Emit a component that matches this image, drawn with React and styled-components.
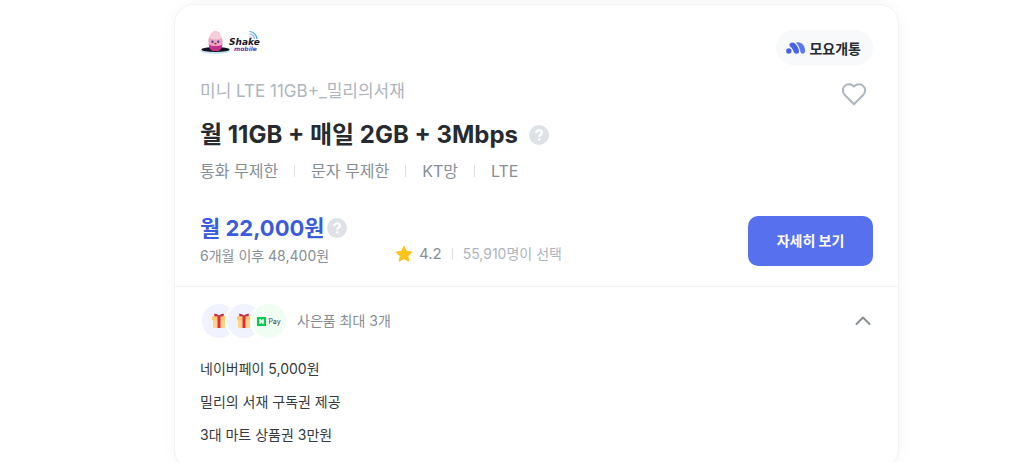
import React, { useState } from "react";
import styled, { createGlobalStyle, css } from "styled-components";

const specs = ["통화 무제한", "문자 무제한", "KT망", "LTE"];
const gifts = ["네이버페이 5,000원", "밀리의 서재 구독권 제공", "3대 마트 상품권 3만원"];

const ShakeLogo = () => (
  <svg width="60" height="26" viewBox="0 0 60 26" role="img" aria-label="Shake mobile">
    <ellipse cx="15.500" cy="20.500" rx="15" ry="3.500" fill="#c3e4f0" />
    <ellipse cx="15.500" cy="19.500" rx="14" ry="2.600" fill="#15131c" />
    <path d="M8.500 13C8 9 9 7 10.500 5.500C10.500 3.500 12 3 12.500 2.500C13 0.800 17 0.800 18 2C20 2.500 20.500 4 20 5.500C22 7 23 9.500 22.500 13.500C22 18.500 20 21 15.500 21C11 21 9 18 8.500 13Z" fill="#eda3c3" />
    <path d="M9.500 8C9.500 6 10.500 5.500 11 5C11 3.500 12.500 2.500 13.500 1.500C15 0.800 18 1.500 18 2.500C19.500 3 20.500 4 20 5.500C21 6 21.500 7 21.500 8.500C18 10 13 10 9.500 8Z" fill="#f6cdd9" />
    <path d="M8.800 14.500C11 16.500 20 16.500 22.400 14.500C22 19 20 21 15.500 21C11 21 9.300 19 8.800 14.500Z" fill="#c02f88" />
    <circle cx="12.500" cy="11.800" r="1.200" fill="#4b4a7d" />
    <circle cx="18.200" cy="11.800" r="1.200" fill="#4b4a7d" />
    <ellipse cx="15.400" cy="13.600" rx="1.200" ry="0.900" fill="#a82b50" />
    <g fill="none" strokeWidth="1.200">
      <path d="M49.500 1.500A8 8 0 0 1 57 9" stroke="#4a9ae8" />
      <path d="M49.500 4A5.500 5.500 0 0 1 54.500 9" stroke="#70b7f0" />
      <path d="M49.500 6.500A3 3 0 0 1 52 9" stroke="#e295c8" />
    </g>
    <LogoText x="29" y="15" fill="#16121c" $size={9}>
      Shake
    </LogoText>
    <LogoText x="34" y="21" fill="#5a3fa8" $size={6}>
      mobile
    </LogoText>
  </svg>
);

const MoyoMark = () => (
  <svg width="20" height="12" viewBox="0 0 20 12" aria-hidden="true">
    <circle cx="2.800" cy="9" r="2.700" fill="#4b63e6" />
    <path d="M3.500 2.200C4.500 0.300 7 -0.200 8.800 1.200C11 3 13 6.500 13 9.200C13 11 11.800 11.700 10.500 11.700C9 11.700 8 10.800 7.500 9.500C7 7.500 6 6 4.500 5C3.500 4.300 3.100 3.200 3.500 2.200Z" fill="#4b63e6" />
    <path d="M10 0.400C12.500 -0.200 15.500 0.500 17.300 3C18.500 4.700 19.200 7 19 9.300C18.900 10.900 17.900 11.700 16.700 11.700C15.300 11.700 14.500 10.700 14.300 9.300C13.800 6 12.300 2.700 10 0.400Z" fill="#5b78f2" />
  </svg>
);

const HelpIcon = () => (
  <svg width="20" height="20" viewBox="0 0 20 20" aria-hidden="true">
    <circle cx="10" cy="10" r="10" fill="#dee2e6" />
    <path d="M7.200 8C7.200 6.200 8.400 5.200 10 5.200C11.700 5.200 12.900 6.200 12.900 7.700C12.900 9.600 10.200 9.600 10.200 11.700" fill="none" stroke="#fff" strokeWidth="2.100" />
    <circle cx="10.200" cy="14.500" r="1.300" fill="#fff" />
  </svg>
);

const HeartIcon = ({ filled }) => (
  <svg width="26" height="26" viewBox="0 0 26 26" aria-hidden="true">
    <path
      d="M13 23.300L4 14.300C1.300 11.500 1.300 7.300 3.800 4.900C6.300 2.500 10.300 2.600 12.500 5L13 5.500L13.500 5C15.700 2.600 19.700 2.500 22.200 4.900C24.700 7.300 24.700 11.500 22 14.300Z"
      fill={filled ? "#adb5bd" : "none"}
      stroke="#adb5bd"
      strokeWidth="2"
      strokeLinejoin="round"
    />
  </svg>
);

const StarIcon = () => (
  <svg width="18" height="18" viewBox="0 0 18 18" aria-hidden="true">
    <path
      d="M9 1.500L11.300 6.300L16.600 7L12.700 10.700L13.700 16L9 13.400L4.300 16L5.300 10.700L1.400 7L6.700 6.300Z"
      fill="#fcc419"
      stroke="#fcc419"
      strokeWidth="1.200"
      strokeLinejoin="round"
    />
  </svg>
);

const GiftIcon = () => (
  <svg width="14" height="16" viewBox="0 0 14 16" aria-hidden="true">
    <rect x="1" y="6" width="12" height="9" rx="1" fill="#ffd485" />
    <rect x="0" y="3" width="14" height="4.500" rx="1" fill="#ffc972" />
    <path d="M5.500 3H8.500V15H5.500Z" fill="#e02b48" />
    <path d="M7 3.500L2.500 3.200L2 0.800L4.500 1L7 2.500L9.500 1L12 0.800L11.500 3.200Z" fill="#c92a45" />
  </svg>
);

const NaverMark = () => (
  <svg width="9" height="9" viewBox="0 0 9 9" aria-hidden="true">
    <rect width="9" height="9" fill="#03cf4d" />
    <path d="M2.300 6.700V2.300H3.900L5.200 4.300V2.300H6.800V6.700H5.200L3.900 4.700V6.700Z" fill="#fff" />
  </svg>
);

const ChevronIcon = () => (
  <svg width="16" height="10" viewBox="0 0 16 10" aria-hidden="true">
    <path d="M1.500 8L8 1.500L14.500 8" fill="none" stroke="#868e96" strokeWidth="2" strokeLinecap="round" strokeLinejoin="round" />
  </svg>
);

export default function App() {
  const [isOpen, setIsOpen] = useState(true);
  const [isLiked, setIsLiked] = useState(false);

  return (
    <Page>
      <GlobalStyle />
      <Card>
        <Summary>
          <BrandRow>
            <ShakeLogo />
            <Badge>
              <MoyoMark />
              모요개통
            </Badge>
          </BrandRow>
          <NameRow>
            <PlanName>미니 LTE 11GB+_밀리의서재</PlanName>
            <HeartButton type="button" aria-label="찜하기" aria-pressed={isLiked} onClick={() => setIsLiked(prev => !prev)}>
              <HeartIcon filled={isLiked} />
            </HeartButton>
          </NameRow>
          <TitleRow>
            <Title>월 11GB + 매일 2GB + 3Mbps</Title>
            <IconButton type="button" aria-label="데이터 도움말">
              <HelpIcon />
            </IconButton>
          </TitleRow>
          <SpecList>
            {specs.map(spec => (
              <li key={spec}>{spec}</li>
            ))}
          </SpecList>
          <PriceRow>
            <PriceBox>
              <Price>
                월 22,000원
                <IconButton type="button" aria-label="요금 도움말">
                  <HelpIcon />
                </IconButton>
              </Price>
              <AfterPrice>6개월 이후 48,400원</AfterPrice>
            </PriceBox>
            <Rating>
              <StarIcon />
              <Score>4.2</Score>
              <Picked>55,910명이 선택</Picked>
            </Rating>
            <DetailButton type="button">자세히 보기</DetailButton>
          </PriceRow>
        </Summary>
        <Benefits>
          <BenefitHead>
            <Circles>
              <Circle>
                <GiftIcon />
              </Circle>
              <Circle>
                <GiftIcon />
              </Circle>
              <Circle $pay>
                <NaverMark />
                Pay
              </Circle>
            </Circles>
            <GiftCount>사은품 최대 3개</GiftCount>
            <ToggleButton
              type="button"
              aria-label="사은품 목록"
              aria-expanded={isOpen}
              $open={isOpen}
              onClick={() => setIsOpen(prev => !prev)}
            >
              <ChevronIcon />
            </ToggleButton>
          </BenefitHead>
          {isOpen && (
            <GiftList>
              {gifts.map(gift => (
                <li key={gift}>{gift}</li>
              ))}
            </GiftList>
          )}
        </Benefits>
      </Card>
    </Page>
  );
}

const GlobalStyle = createGlobalStyle`
  * {
    box-sizing: border-box;
  }

  body {
    margin: 0;
    background-color: #fff;
    font-family: Inter, "Noto Sans CJK KR", sans-serif;
    scrollbar-width: none;
  }

  h2, p, ul {
    margin: 0;
    padding: 0;
    list-style: none;
  }

  button {
    border: 0;
    padding: 0;
    background: none;
    font: inherit;
    cursor: pointer;
  }

  svg {
    display: block;
    flex-shrink: 0;
  }
`;

const Page = styled.main`
  padding: 4px 123px 24px 174px;
`;

const Card = styled.article`
  border: 1px solid #f1f3f5;
  border-radius: 20px;
  background-color: #fff;
  box-shadow: 0 0 16px rgba(0, 0, 0, 0.04);
`;

const Summary = styled.section`
  padding: 25px 25px 20px;
  border-bottom: 1px solid #f1f3f5;
`;

const BrandRow = styled.div`
  display: flex;
  align-items: flex-start;
`;

const LogoText = styled.text`
  font-family: "DejaVu Sans", sans-serif;
  font-size: ${props => props.$size}px;
  font-weight: 700;
  font-style: italic;
`;

const Badge = styled.span`
  display: flex;
  align-items: center;
  gap: 3px;
  height: 35px;
  margin-left: auto;
  padding: 0 12px 0 10px;
  border-radius: 18px;
  background-color: #f8f9fa;
  color: #262b32;
  font-size: 14px;
  font-weight: 700;
`;

const NameRow = styled.div`
  display: flex;
  align-items: flex-start;
  justify-content: space-between;
  margin-top: 14px;
`;

const PlanName = styled.p`
  color: #adb5bd;
  font-size: 17px;
  line-height: 24px;
`;

const HeartButton = styled.button`
  height: 30px;
  margin-right: 6px;
`;

const TitleRow = styled.div`
  display: flex;
  align-items: center;
  gap: 11px;
  margin-top: 10px;
`;

const Title = styled.h2`
  color: #262b32;
  font-size: 24px;
  font-weight: 700;
  line-height: 32px;
`;

const IconButton = styled.button`
  display: flex;
`;

const SpecList = styled.ul`
  display: flex;
  margin-top: 8px;
  color: #868e96;
  font-size: 16px;
  line-height: 24px;

  li {
    display: flex;
    align-items: center;
  }

  li + li::before {
    content: "";
    width: 1px;
    height: 12px;
    margin: 0 16px;
    background-color: #dee2e6;
  }
`;

const PriceRow = styled.div`
  display: flex;
  align-items: center;
  margin-top: 33px;
`;

const PriceBox = styled.div`
  width: 195px;
`;

const Price = styled.p`
  display: flex;
  align-items: center;
  gap: 2px;
  color: #3b5bdb;
  font-size: 22px;
  font-weight: 700;
  line-height: 24px;
`;

const AfterPrice = styled.p`
  margin-top: 6px;
  color: #868e96;
  font-size: 14px;
  line-height: 20px;
`;

const Rating = styled.div`
  display: flex;
  align-items: center;
  align-self: flex-end;
  margin-bottom: 2px;
  line-height: 20px;
`;

const Score = styled.span`
  margin-left: 6px;
  color: #868e96;
  font-size: 15px;
`;

const Picked = styled.span`
  display: flex;
  align-items: center;
  color: #adb5bd;
  font-size: 14px;

  &::before {
    content: "";
    width: 1px;
    height: 12px;
    margin: 0 10px;
    background-color: #dee2e6;
  }
`;

const DetailButton = styled.button`
  width: 125px;
  height: 50px;
  margin-left: auto;
  padding-bottom: 2px;
  border-radius: 10px;
  background-color: #5770ee;
  color: #fff;
  font-size: 14px;
  font-weight: 700;
`;

const Benefits = styled.section`
  padding: 15px 25px 24px;
`;

const BenefitHead = styled.div`
  display: flex;
  align-items: center;
`;

const Circles = styled.div`
  display: flex;
`;

const Circle = styled.span`
  display: flex;
  align-items: center;
  justify-content: center;
  gap: 2px;
  width: 38px;
  height: 38px;
  border: 2px solid #fff;
  border-radius: 50%;
  background-color: #f0f2ff;

  & + & {
    margin-left: -13px;
  }

  ${props =>
    props.$pay &&
    css`
      background-color: #effdf3;
      color: #343a40;
      font-size: 7px;
    `}
`;

const GiftCount = styled.p`
  margin-left: 9px;
  color: #868e96;
  font-size: 14px;
  line-height: 20px;
`;

const ToggleButton = styled.button`
  display: flex;
  margin-right: 2px;
  margin-left: auto;
  transform: ${props => (props.$open ? "none" : "rotate(180deg)")};
`;

const GiftList = styled.ul`
  display: grid;
  gap: 13px;
  margin-top: 19px;
  color: #343a40;
  font-size: 14px;
  line-height: 20px;
`;
